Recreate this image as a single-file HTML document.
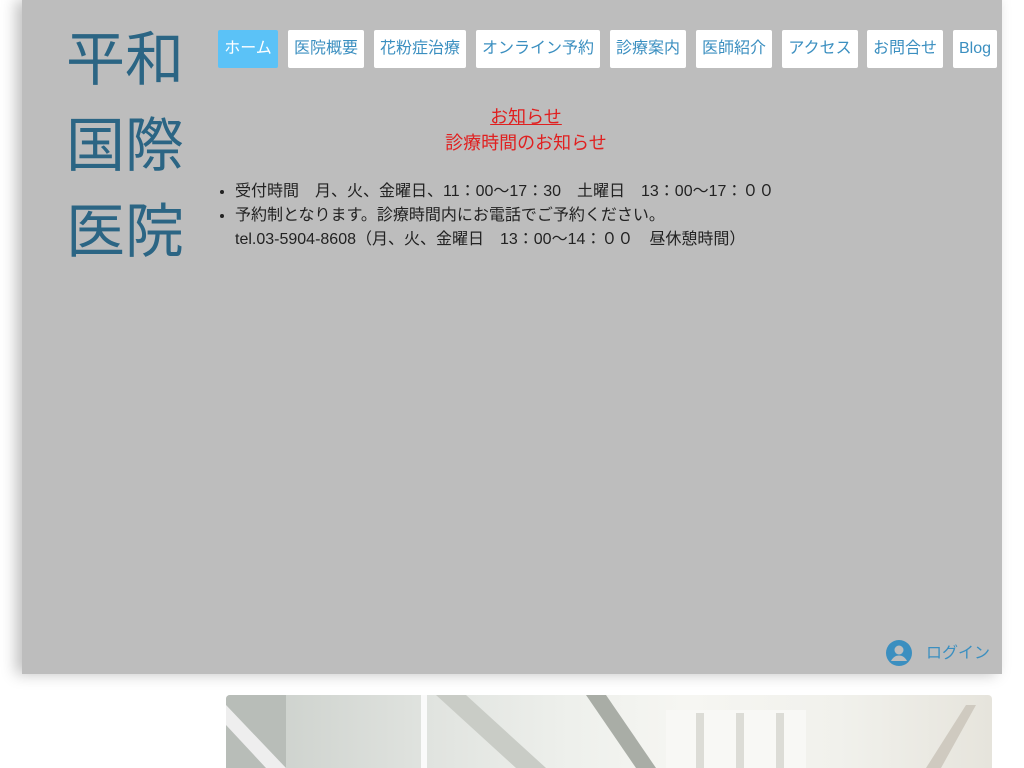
<!DOCTYPE html>
<html><head><meta charset="utf-8"><style>
*{margin:0;padding:0;box-sizing:border-box}
body{width:1024px;height:768px;overflow:hidden;background:#fff;font-family:"Liberation Sans","Noto Sans CJK JP",sans-serif;position:relative}
.panel{position:absolute;left:22px;top:0;width:980px;height:674px;background:#bdbdbd;box-shadow:-6px 0 14px rgba(0,0,0,.25)}
.title{position:absolute;left:66px;top:17px;font-size:59px;line-height:86px;color:#2b6584;width:130px}
.nav a{position:absolute;top:30px;height:38px;line-height:38px;background:#fff;color:#3b8fc0;font-size:16px;text-align:center;border-radius:2px;text-decoration:none}
.nav a.on{background:#5bc2f7;color:#fff}
.news{position:absolute;left:226px;top:104px;width:600px;text-align:center;color:#e02020;font-size:18px;line-height:26px}
.news u{text-decoration:underline}
ul{position:absolute;left:235px;top:180px;color:#222;font-size:16px;line-height:24px;list-style:disc}
ul li::marker{font-size:13px}
.login{position:absolute;left:886px;top:640px;color:#3b8fc0;font-size:16px}
.photo{position:absolute;left:226px;top:695px;width:766px;height:73px;border-radius:4px 4px 0 0;overflow:hidden;background:linear-gradient(90deg,#c8cdc8 0%,#dfe2de 25%,#eef0ec 45%,#f6f6f2 60%,#f1f1ec 80%,#e6e4dc 100%)}
</style></head><body>
<div class="panel"></div>
<div class="title">平和国際医院</div>
<div class="nav">
<a class="on" style="left:218px;width:60px">ホーム</a>
<a style="left:288px;width:76px">医院概要</a>
<a style="left:374px;width:92px">花粉症治療</a>
<a style="left:476px;width:124px">オンライン予約</a>
<a style="left:610px;width:76px">診療案内</a>
<a style="left:696px;width:76px">医師紹介</a>
<a style="left:782px;width:76px">アクセス</a>
<a style="left:867px;width:76px">お問合せ</a>
<a style="left:953px;width:44px">Blog</a>
</div>
<div class="news"><u>お知らせ</u><br>診療時間のお知らせ</div>
<ul>
<li>受付時間　月、火、金曜日、11：00〜17：30　土曜日　13：00〜17：００</li>
<li>予約制となります。診療時間内にお電話でご予約ください。<br>tel.03-5904-8608（月、火、金曜日　13：00〜14：００　昼休憩時間）</li>
</ul>
<div class="login">
<svg width="26" height="26" viewBox="0 0 26 26" style="position:absolute;left:0;top:0"><circle cx="13" cy="13" r="13" fill="#3b8fc0"/><circle cx="13" cy="10" r="4.5" fill="#bdbdbd"/><path d="M5 21c2-4 5-5.5 8-5.5s6 1.5 8 5.5" fill="#bdbdbd"/></svg>
<span style="position:absolute;left:40px;top:-1px;white-space:nowrap">ログイン</span>
</div>
<div class="photo">
<svg width="766" height="73" style="position:absolute;left:0;top:0">
<rect x="0" y="0" width="60" height="73" fill="#b8bdb8"/>
<path d="M0 10 L60 73 L40 73 L0 30Z" fill="#eee"/>
<rect x="195" y="0" width="6" height="73" fill="#fafafa"/>
<path d="M210 0 L240 0 L320 73 L290 73Z" fill="#c9ccc6"/>
<path d="M360 0 L380 0 L430 73 L410 73Z" fill="#a9ada6"/>
<rect x="440" y="15" width="140" height="58" fill="#f8f8f5"/>
<rect x="470" y="18" width="8" height="55" fill="#dcdcd6"/>
<rect x="510" y="18" width="8" height="55" fill="#dcdcd6"/>
<rect x="550" y="18" width="8" height="55" fill="#dcdcd6"/>
<path d="M700 73 L740 10 L750 10 L715 73Z" fill="#cfcac0"/>
</svg>
</div>
</body></html>
